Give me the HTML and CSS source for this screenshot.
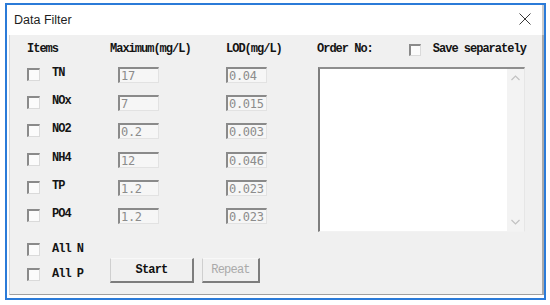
FILE: index.html
```html
<!DOCTYPE html>
<html>
<head>
<meta charset="utf-8">
<link rel="stylesheet" href="styles.css">
</head>
<body>
<div class="window">
  <div class="titlebar">
    <span class="title">Data Filter</span>
    <svg class="close" width="12" height="12" viewBox="0 0 12 12"><path d="M0.5 0.5 L11.5 11.5 M11.5 0.5 L0.5 11.5" stroke="#3a3a3a" stroke-width="1" fill="none"/></svg>
  </div>
  <div class="client">
    <div class="left">
      <div class="grid">
        <div class="lbl h-items">Items</div>
        <div class="lbl h-max">Maximum(mg/L)</div>
        <div class="lbl h-lod">LOD(mg/L)</div>

        <div class="cb"></div><div class="lbl">TN</div><div class="inp">17</div><div class="inp">0.04</div>
        <div class="cb"></div><div class="lbl">NOx</div><div class="inp">7</div><div class="inp">0.015</div>
        <div class="cb"></div><div class="lbl">NO2</div><div class="inp">0.2</div><div class="inp">0.003</div>
        <div class="cb"></div><div class="lbl">NH4</div><div class="inp">12</div><div class="inp">0.046</div>
        <div class="cb"></div><div class="lbl">TP</div><div class="inp">1.2</div><div class="inp">0.023</div>
        <div class="cb"></div><div class="lbl">PO4</div><div class="inp">1.2</div><div class="inp">0.023</div>
      </div>
      <div class="bottom">
        <div class="checks">
          <div class="chk-row"><div class="cb"></div><div class="lbl">All N</div></div>
          <div class="chk-row last"><div class="cb"></div><div class="lbl">All P</div></div>
        </div>
        <div class="buttons">
          <div class="btn start">Start</div>
          <div class="btn repeat">Repeat</div>
        </div>
      </div>
    </div>
    <div class="right">
      <div class="rhead">
        <div class="lbl">Order No:</div>
        <div class="cb small"></div>
        <div class="lbl save">Save separately</div>
      </div>
      <div class="memo">
        <div class="sb">
          <svg width="9" height="6" viewBox="0 0 9 6"><path d="M0.5 5 L4.5 1 L8.5 5" stroke="#c2c2c2" stroke-width="1.2" fill="none"/></svg>
          <svg width="9" height="6" viewBox="0 0 9 6"><path d="M0.5 1 L4.5 5 L8.5 1" stroke="#c2c2c2" stroke-width="1.2" fill="none"/></svg>
        </div>
      </div>
    </div>
  </div>
</div>
</body>
</html>
```

FILE: styles.css
```css
html, body {
  margin: 0;
  padding: 0;
  background: #ffffff;
}
body {
  width: 550px;
  height: 305px;
  overflow: hidden;
}
.window {
  margin: 3px 0 0 5px;
  width: 537px;
  height: 293px;
  border: 2px solid #2b7bd8;
  background: #ffffff;
  display: flex;
  flex-direction: column;
}
.titlebar {
  height: 30px;
  flex: none;
  display: flex;
  align-items: center;
  justify-content: space-between;
  padding: 0 11px 0 7px;
  border-right: 2px solid #cbcbcb;
}
.title {
  font: 12.5px "Liberation Sans", Arial, sans-serif;
  color: #1e1e1e;
  margin-top: -1px;
}
.close {
  display: block;
  margin-top: -2px;
}
.client {
  flex: 1;
  margin: 0 0 3px 2px;
  background: #f0f0f0;
  border-left: 1px solid #d6d6d6;
  border-right: 2px solid #a9a9a9;
  border-bottom: 1px solid #a0a0a0;
  display: flex;
}
.left {
  width: 307px;
  flex: none;
  box-sizing: border-box;
  padding: 8px 0 0 17px;
}
.lbl {
  font: bold 12px/12px "Liberation Mono", "Courier New", monospace;
  letter-spacing: -1px;
  color: #141414;
  white-space: nowrap;
}
.grid {
  display: grid;
  grid-template-columns: 25px 66px 108px 41px;
  grid-template-rows: 24px repeat(6, 28.2px);
  align-items: start;
}
.h-items { grid-column: 1 / 3; }
.h-max { grid-column: 3; margin-left: -8px; }
.h-lod { grid-column: 4; }
.cb {
  width: 13px;
  height: 13px;
  box-sizing: border-box;
  margin-top: 1px;
  border-top: 2px solid #8a8a8a;
  border-left: 2px solid #8a8a8a;
  border-right: 1px solid #dadada;
  border-bottom: 1px solid #dadada;
  background: #fbfbfb;
}
.cb.small {
  width: 12px;
  height: 12px;
}
.inp {
  width: 41px;
  height: 16px;
  box-sizing: border-box;
  border-top: 2px solid #8a8a8a;
  border-left: 2px solid #8a8a8a;
  border-right: 1px solid #e2e2e2;
  border-bottom: 1px solid #e2e2e2;
  background: #f6f6f6;
  font: 12px/14px "DejaVu Sans Mono", monospace;
  letter-spacing: -0.3px;
  color: #8c8c8c;
  padding-left: 1px;
  overflow: hidden;
  white-space: nowrap;
}
.bottom {
  display: flex;
  margin-top: 6px;
}
.checks {
  width: 83px;
  flex: none;
}
.chk-row {
  display: flex;
  height: 25px;
  gap: 12px;
  align-items: flex-start;
}
.chk-row.last {
  height: 16px;
}
.chk-row .lbl {
  margin-top: 1px;
}
.buttons {
  display: flex;
  gap: 8px;
  align-self: flex-end;
}
.btn {
  height: 25px;
  box-sizing: border-box;
  border-top: 1px solid #f8f8f8;
  border-left: 1px solid #cfcfcf;
  border-right: 2px solid #7d7d7d;
  border-bottom: 2px solid #7d7d7d;
  background: #f0f0f0;
  display: flex;
  align-items: center;
  justify-content: center;
  font: bold 12px/12px "Liberation Mono", "Courier New", monospace;
  letter-spacing: -0.8px;
}
.btn.start {
  width: 84px;
  color: #111;
}
.btn.repeat {
  width: 58px;
  color: #aaaaaa;
  font-weight: normal;
}
.right {
  flex: 1;
  padding-top: 8px;
}
.rhead {
  display: flex;
  align-items: flex-start;
  height: 12px;
}
.rhead .cb {
  margin-left: 36px;
}
.rhead .save {
  margin-left: 12px;
}
.memo {
  margin: 12px 0 0 1px;
  width: 207px;
  height: 165px;
  box-sizing: border-box;
  border-top: 2px solid #8e8e8e;
  border-left: 2px solid #7e7e7e;
  border-right: 1px solid #e6e6e6;
  border-bottom: 1px solid #f2f2f2;
  background: #ffffff;
  display: flex;
}
.sb {
  margin-left: auto;
  width: 17px;
  background: #f3f3f3;
  display: flex;
  flex-direction: column;
  justify-content: space-between;
  align-items: center;
  padding: 6px 0 6px;
  box-sizing: border-box;
}
.sb svg { display: block; }
```
